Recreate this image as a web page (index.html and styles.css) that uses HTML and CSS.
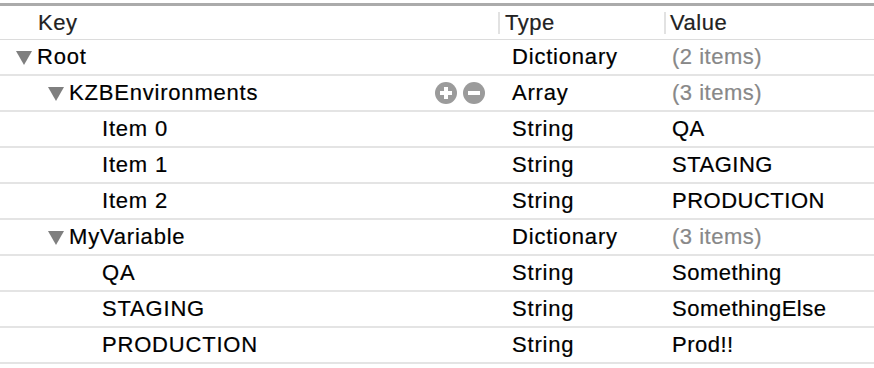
FILE: index.html
```html
<!DOCTYPE html>
<html>
<head>
<meta charset="utf-8">
<link rel="stylesheet" href="styles.css">
</head>
<body>
<div class="table">
  <div class="topbar"></div>
  <div class="header">
    <div class="hcell hkey">Key</div>
    <div class="hcell htype"><span class="sep"></span>Type</div>
    <div class="hcell hval"><span class="sep"></span>Value</div>
  </div>

  <div class="row">
    <div class="key l0"><span class="tri"></span><span class="name">Root</span></div>
    <div class="type">Dictionary</div>
    <div class="val muted">(2 items)</div>
  </div>
  <div class="row">
    <div class="key l1"><span class="tri"></span><span class="name">KZBEnvironments</span>
      <span class="actions">
        <svg width="22" height="22" viewBox="0 0 22 22"><circle cx="11" cy="11" r="11" fill="#9b9b9b"/><rect x="5" y="9" width="12" height="4" fill="#fff"/><rect x="9" y="5" width="4" height="12" fill="#fff"/></svg>
        <svg width="22" height="22" viewBox="0 0 22 22"><circle cx="11" cy="11" r="11" fill="#9b9b9b"/><rect x="5" y="9" width="12" height="4" fill="#fff"/></svg>
      </span>
    </div>
    <div class="type">Array</div>
    <div class="val muted">(3 items)</div>
  </div>
  <div class="row">
    <div class="key l2"><span class="name">Item 0</span></div>
    <div class="type">String</div>
    <div class="val">QA</div>
  </div>
  <div class="row">
    <div class="key l2"><span class="name">Item 1</span></div>
    <div class="type">String</div>
    <div class="val">STAGING</div>
  </div>
  <div class="row">
    <div class="key l2"><span class="name">Item 2</span></div>
    <div class="type">String</div>
    <div class="val">PRODUCTION</div>
  </div>
  <div class="row">
    <div class="key l1"><span class="tri"></span><span class="name">MyVariable</span></div>
    <div class="type">Dictionary</div>
    <div class="val muted">(3 items)</div>
  </div>
  <div class="row">
    <div class="key l2"><span class="name">QA</span></div>
    <div class="type">String</div>
    <div class="val">Something</div>
  </div>
  <div class="row">
    <div class="key l2"><span class="name">STAGING</span></div>
    <div class="type">String</div>
    <div class="val">SomethingElse</div>
  </div>
  <div class="row">
    <div class="key l2"><span class="name">PRODUCTION</span></div>
    <div class="type">String</div>
    <div class="val">Prod!!</div>
  </div>
</div>
</body>
</html>
```

FILE: styles.css
```css
html, body {
  margin: 0;
  padding: 0;
  background: #fff;
}
body {
  font-family: "Liberation Sans", Arial, sans-serif;
  font-size: 22px;
  letter-spacing: 0.5px;
  color: #111;
  width: 874px;
  height: 368px;
  overflow: hidden;
  -webkit-text-stroke: 0.2px currentColor;
}
.table {
  padding-top: 3px;
}
.topbar {
  height: 3px;
  background: #ababab;
}
.header {
  display: grid;
  grid-template-columns: 498px 166px 1fr;
  height: 33px;
  border-bottom: 1px solid #dcdcdc;
  align-items: center;
  color: #222;
}
.hcell {
  display: flex;
  align-items: center;
  height: 100%;
}
.hkey { padding-left: 38px; }
.sep {
  width: 2px;
  height: 22px;
  background: #e2e2e2;
  margin-right: 5px;
}
.hval .sep { margin-right: 4px; }

.row {
  display: grid;
  grid-template-columns: 498px 166px 1fr;
  height: 34px;
  border-bottom: 2px solid #e4e4e4;
  align-items: center;
  color: #000;
}
.key {
  display: flex;
  align-items: center;
  height: 100%;
}
.key.l0 { padding-left: 16px; }
.key.l1 { padding-left: 48px; }
.key.l2 { padding-left: 102px; }
.tri {
  width: 0;
  height: 0;
  border-left: 8.5px solid transparent;
  border-right: 8.5px solid transparent;
  border-top: 14px solid #7f7f7f;
  margin-right: 5px;
  margin-top: 1px;
}
.name { letter-spacing: 0.8px; }
.actions {
  margin-left: auto;
  margin-right: 13px;
  display: flex;
  gap: 6px;
  align-items: center;
}
.actions svg { display: block; }
.type { padding-left: 14px; letter-spacing: 0.8px; }
.val { padding-left: 8px; }
.muted { color: #888; }
```
